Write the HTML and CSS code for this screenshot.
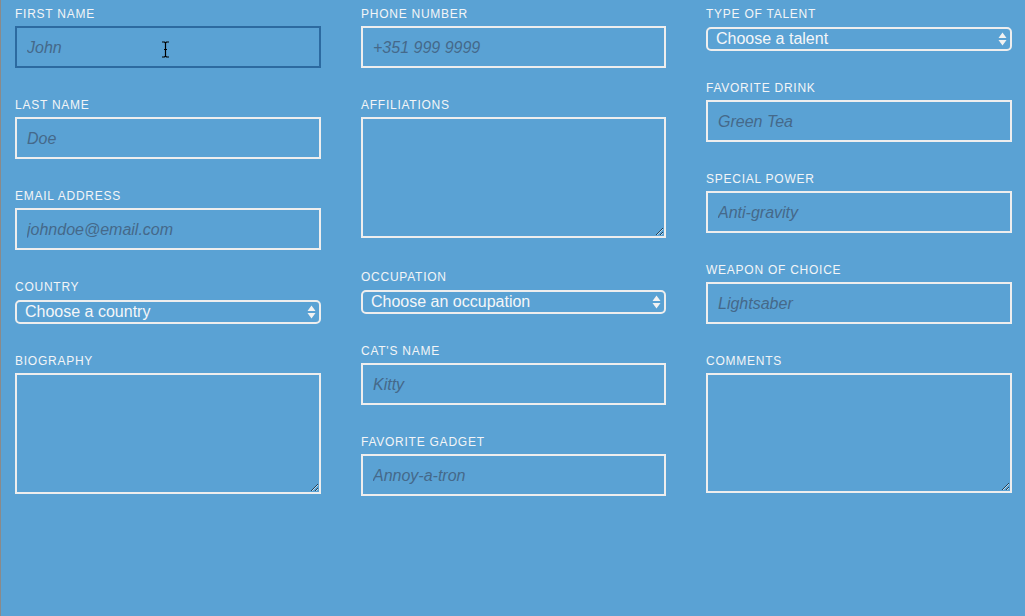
FILE: index.html
```html
<!DOCTYPE html>
<html lang="en">
<head>
<meta charset="utf-8">
<title>Form</title>
<link rel="stylesheet" href="styles.css">
</head>
<body>
<form class="form">
  <div class="col">
    <div class="field">
      <label class="label">First Name</label>
      <input class="input focused" type="text" placeholder="John">
      <svg class="ibeam" width="9" height="17" viewBox="0 0 9 17"><path d="M1 1h2.5l1 1 1-1H8M4.5 2v13M1 16h2.5l1-1 1 1H8M3 8.5h3" fill="none" stroke="#000" stroke-width="1.2"/></svg>
    </div>
    <div class="field">
      <label class="label">Last Name</label>
      <input class="input" type="text" placeholder="Doe">
    </div>
    <div class="field">
      <label class="label">Email Address</label>
      <input class="input" type="text" placeholder="johndoe@email.com">
    </div>
    <div class="field field-select">
      <label class="label">Country</label>
      <div class="select-wrap">
        <select class="select"><option>Choose a country</option></select>
        <svg class="arrows" width="9" height="14" viewBox="0 0 9 14"><path d="M4.5 0.5L8.5 6H0.5Z M4.5 13.5L8.5 8H0.5Z" fill="#f2f2f2"/></svg>
      </div>
    </div>
    <div class="field">
      <label class="label">Biography</label>
      <textarea class="textarea"></textarea>
    </div>
  </div>

  <div class="col">
    <div class="field">
      <label class="label">Phone Number</label>
      <input class="input" type="text" placeholder="+351 999 9999">
    </div>
    <div class="field field-area">
      <label class="label">Affiliations</label>
      <textarea class="textarea"></textarea>
    </div>
    <div class="field field-select">
      <label class="label">Occupation</label>
      <div class="select-wrap">
        <select class="select"><option>Choose an occupation</option></select>
        <svg class="arrows" width="9" height="14" viewBox="0 0 9 14"><path d="M4.5 0.5L8.5 6H0.5Z M4.5 13.5L8.5 8H0.5Z" fill="#f2f2f2"/></svg>
      </div>
    </div>
    <div class="field">
      <label class="label">Cat's Name</label>
      <input class="input" type="text" placeholder="Kitty">
    </div>
    <div class="field">
      <label class="label">Favorite Gadget</label>
      <input class="input" type="text" placeholder="Annoy-a-tron">
    </div>
  </div>

  <div class="col">
    <div class="field field-select">
      <label class="label">Type of Talent</label>
      <div class="select-wrap">
        <select class="select"><option>Choose a talent</option></select>
        <svg class="arrows" width="9" height="14" viewBox="0 0 9 14"><path d="M4.5 0.5L8.5 6H0.5Z M4.5 13.5L8.5 8H0.5Z" fill="#f2f2f2"/></svg>
      </div>
    </div>
    <div class="field">
      <label class="label">Favorite Drink</label>
      <input class="input" type="text" placeholder="Green Tea">
    </div>
    <div class="field">
      <label class="label">Special Power</label>
      <input class="input" type="text" placeholder="Anti-gravity">
    </div>
    <div class="field">
      <label class="label">Weapon of Choice</label>
      <input class="input" type="text" placeholder="Lightsaber">
    </div>
    <div class="field">
      <label class="label">Comments</label>
      <textarea class="textarea textarea-short"></textarea>
    </div>
  </div>
</form>
</body>
</html>
```

FILE: styles.css
```css
html, body {
  margin: 0;
  height: 100%;
}

body {
  background: #5aa2d4;
  border-left: 1px solid #8a8a8a;
  box-sizing: border-box;
  font-family: "Liberation Sans", Arial, sans-serif;
}

.form {
  display: grid;
  grid-template-columns: 306px 305px 306px;
  column-gap: 40px;
  padding: 5px 0 0 14px;
  align-items: start;
}

.col {
  display: flex;
  flex-direction: column;
}

.field {
  position: relative;
  display: flex;
  flex-direction: column;
  margin-bottom: 28px;
}

.field-area {
  margin-bottom: 30px;
}

.label {
  display: block;
  padding-top: 1px;
  font-size: 12px;
  line-height: 16px;
  letter-spacing: 0.75px;
  text-transform: uppercase;
  color: #f3f5f7;
  margin-bottom: 4px;
}

.field-select .label {
  margin-bottom: 5px;
}

.input {
  box-sizing: border-box;
  width: 100%;
  height: 42px;
  margin: 0;
  padding: 2px 10px 0;
  border: 2px solid #eeeeee;
  border-radius: 0;
  background: transparent;
  font-family: "Liberation Sans", Arial, sans-serif;
  font-size: 16px;
  font-style: italic;
  color: #ffffff;
  outline: none;
}

.input::placeholder {
  color: #45698a;
  opacity: 1;
}

.input.focused {
  border-color: #2c6aa0;
}

.ibeam {
  position: absolute;
  left: 146px;
  top: 36px;
}

.select-wrap {
  position: relative;
}

.select {
  -webkit-appearance: none;
  appearance: none;
  box-sizing: border-box;
  display: block;
  width: 100%;
  height: 24px;
  margin: 0;
  padding: 0 0 0 8px;
  border: 2px solid #eeeeee;
  border-radius: 5px;
  background: transparent;
  font-family: "Liberation Sans", Arial, sans-serif;
  font-size: 16px;
  line-height: 20px;
  color: #f4f6f8;
  outline: none;
}

.arrows {
  position: absolute;
  right: 5px;
  top: 5px;
  pointer-events: none;
}

.textarea {
  box-sizing: border-box;
  display: block;
  width: 100%;
  height: 121px;
  margin: 0;
  border: 2px solid #eeeeee;
  border-radius: 0;
  background: transparent;
  outline: none;
}

.textarea-short {
  height: 120px;
}
```
